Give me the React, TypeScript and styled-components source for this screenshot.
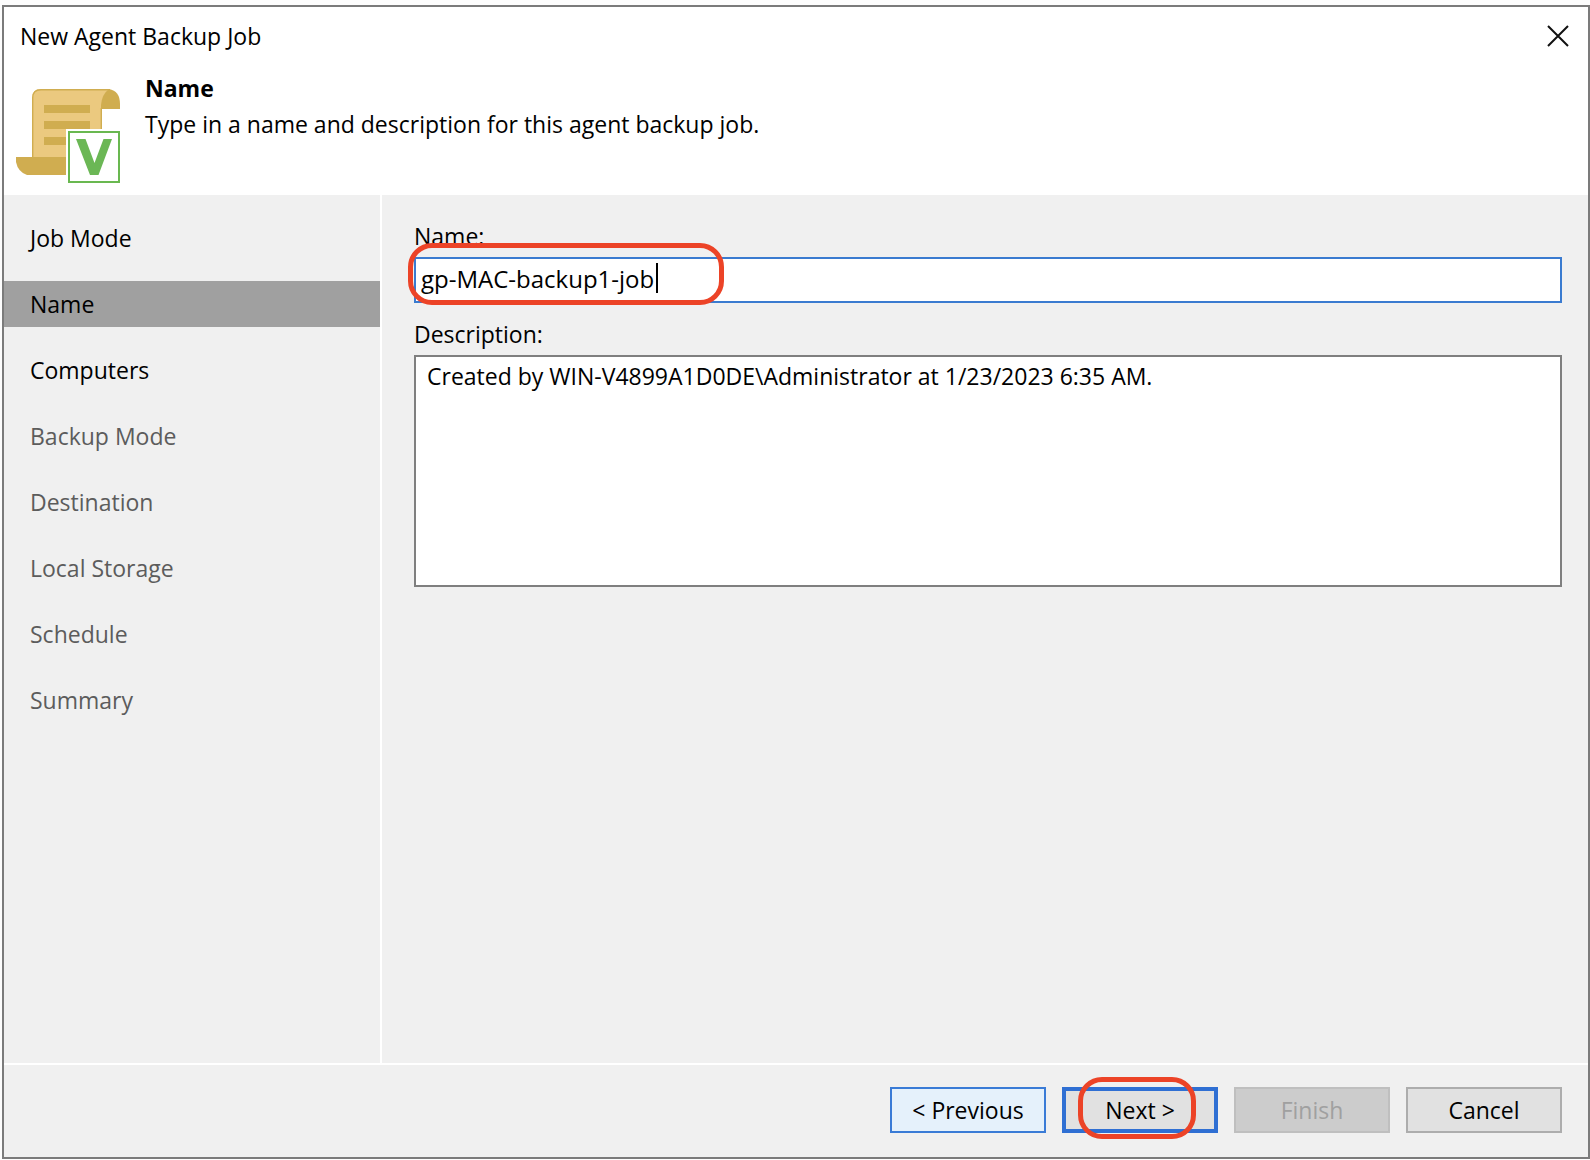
import React, { useState } from "react";
import styled, { createGlobalStyle } from "styled-components";

const GlobalStyle = createGlobalStyle`
  *, *::before, *::after { box-sizing: border-box; }
  body {
    margin: 0;
    background: #fdfdfd;
    color: #000;
    font-family: "Open Sans", "Noto Sans", sans-serif;
    font-size: 23px;
    line-height: 32px;
  }
  button, input, textarea { font: inherit; color: inherit; }
`;

const Page = styled.div`
  display: flex;
  min-height: 100vh;
  padding: 5px 0 1px 2px;
`;

const Dialog = styled.main`
  flex: 1;
  display: flex;
  flex-direction: column;
  border: 2px solid #7b7b7b;
  background: #f0f0f0;
`;

const TitleBar = styled.header`
  display: flex;
  justify-content: space-between;
  align-items: center;
  height: 58px;
  padding: 0 19px 0 16px;
  background: #fff;
`;

const Title = styled.h1`
  margin: 0;
  font-size: 23px;
  font-weight: 400;
`;

const CloseButton = styled.button`
  display: flex;
  padding: 0;
  border: 0;
  background: none;
`;

const Banner = styled.section`
  display: flex;
  gap: 24px;
  height: 130px;
  padding: 7px 12px 0;
  background: #fff;
`;

const JobIcon = styled.svg`
  margin-top: 16px;
  flex: none;
`;

const StepTitle = styled.h2`
  margin: 0 0 4px;
  font-size: 23px;
  font-weight: 700;
`;

const StepText = styled.p`
  margin: 0;
`;

const Body = styled.div`
  flex: 1;
  display: flex;
`;

const Sidebar = styled.nav`
  display: flex;
  flex-direction: column;
  gap: 20px;
  width: 378px;
  padding-top: 20px;
  border-right: 2px solid #fff;
`;

const Step = styled.button<{ $selected?: boolean; $pending?: boolean }>`
  height: 46px;
  padding: 0 26px;
  border: 0;
  text-align: left;
  background: ${(p) => (p.$selected ? "#a0a0a0" : "transparent")};
  color: ${(p) => (p.$pending ? "#5c5c5c" : "#000")};
`;

const Content = styled.form`
  flex: 1;
  display: flex;
  flex-direction: column;
  padding: 25px 26px 0 32px;
`;

const Label = styled.label`
  height: 32px;
  margin-bottom: 5px;
`;

const FieldBox = styled.div`
  position: relative;
  display: flex;
  margin-bottom: 15px;
`;

const TextInput = styled.input`
  flex: 1;
  min-width: 0;
  height: 46px;
  padding: 0 5px 3px;
  border: 2px solid #3a7bd0;
  border-radius: 0;
  outline: 0;
  background: #fff;
  font-size: 24px;
`;

const Caret = styled.span`
  position: absolute;
  left: 242px;
  top: 6px;
  width: 2px;
  height: 30px;
  background: #000;
`;

const TextBox = styled.textarea`
  display: block;
  height: 232px;
  padding: 3px 11px;
  border: 2px solid #7f7f7f;
  border-radius: 0;
  outline: 0;
  resize: none;
  background: #fff;
`;

const Highlight = styled.span<{ $width: number; $left: number; $top: number }>`
  position: absolute;
  left: ${(p) => p.$left}px;
  top: ${(p) => p.$top}px;
  width: ${(p) => p.$width}px;
  height: 62px;
  border: 5px solid #ec4327;
  border-radius: 24px;
  pointer-events: none;
`;

const Footer = styled.footer`
  display: flex;
  justify-content: flex-end;
  gap: 16px;
  padding: 22px 26px 24px;
  border-top: 2px solid #fff;
`;

const ButtonSlot = styled.div`
  position: relative;
  display: flex;
`;

const tones = {
  hover: "border: 2px solid #3a7bd6; background: #e5f1fb; color: #000;",
  primary: "border: 4px solid #2f6fd3; background: #e1e1e1; color: #000;",
  disabled: "border: 2px solid #bfbfbf; background: #cccccc; color: #a0a0a0;",
  normal: "border: 2px solid #adadad; background: #e1e1e1; color: #000;",
};

const Button = styled.button<{ $tone: keyof typeof tones }>`
  width: 156px;
  height: 46px;
  padding: 0;
  border-radius: 0;
  ${(p) => tones[p.$tone]}
`;

const steps = [
  "Job Mode",
  "Name",
  "Computers",
  "Backup Mode",
  "Destination",
  "Local Storage",
  "Schedule",
  "Summary",
];

export default function App() {
  const [name, setName] = useState("gp-MAC-backup1-job");
  const [description, setDescription] = useState(
    "Created by WIN-V4899A1D0DE\\Administrator at 1/23/2023 6:35 AM."
  );

  return (
    <>
      <GlobalStyle />
      <Page>
        <Dialog>
          <TitleBar>
            <Title>New Agent Backup Job</Title>
            <CloseButton type="button" aria-label="Close">
              <svg width="22" height="22" viewBox="0 0 22 22">
                <path d="M1 1L21 21M21 1L1 21" stroke="#111" strokeWidth="2" />
              </svg>
            </CloseButton>
          </TitleBar>
          <Banner>
            <JobIcon width="105" height="96" viewBox="0 0 105 96" aria-hidden="true">
              <path d="M16 70V10Q16 1 25 1H94Q86 6 86 18V70Z" fill="#ebc97f" />
              <path d="M16.700 70V10Q16.700 1.700 25 1.700H94M85.300 20V41" fill="none" stroke="#d0ad50" strokeWidth="1.4" />
              <path d="M85 21V17Q86 6 93 1Q104 3 104 16V21Z" fill="#d0ad50" />
              <path d="M28 17H74V25H28ZM28 33H74V41H28ZM28 49H74V57H28Z" fill="#d0ad50" />
              <path d="M0 69H54V87H11Q2 84 0 74Z" fill="#d0ad50" />
              <rect x="50" y="41" width="55" height="55" fill="#fff" />
              <rect x="53" y="44" width="50" height="50" fill="#fff" stroke="#69b850" strokeWidth="2" />
              <path d="M60 51H69.500L78.500 75L87.500 51H96L82.500 87H74Z" fill="#6bb755" />
            </JobIcon>
            <div>
              <StepTitle>Name</StepTitle>
              <StepText>Type in a name and description for this agent backup job.</StepText>
            </div>
          </Banner>
          <Body>
            <Sidebar aria-label="Wizard steps">
              {steps.map((step, i) => (
                <Step key={step} type="button" $selected={i === 1} $pending={i > 2}>
                  {step}
                </Step>
              ))}
            </Sidebar>
            <Content>
              <Label htmlFor="job-name">Name:</Label>
              <FieldBox>
                <TextInput id="job-name" value={name} onChange={(e) => setName(e.target.value)} />
                <Caret />
                <Highlight $left={-6} $top={-14} $width={316} />
              </FieldBox>
              <Label htmlFor="job-description">Description:</Label>
              <TextBox
                id="job-description"
                value={description}
                onChange={(e) => setDescription(e.target.value)}
              />
            </Content>
          </Body>
          <Footer>
            <Button type="button" $tone="hover">&lt; Previous</Button>
            <ButtonSlot>
              <Button type="button" $tone="primary">Next &gt;</Button>
              <Highlight $left={16} $top={-10} $width={118} />
            </ButtonSlot>
            <Button type="button" $tone="disabled" disabled>Finish</Button>
            <Button type="button" $tone="normal">Cancel</Button>
          </Footer>
        </Dialog>
      </Page>
    </>
  );
}
